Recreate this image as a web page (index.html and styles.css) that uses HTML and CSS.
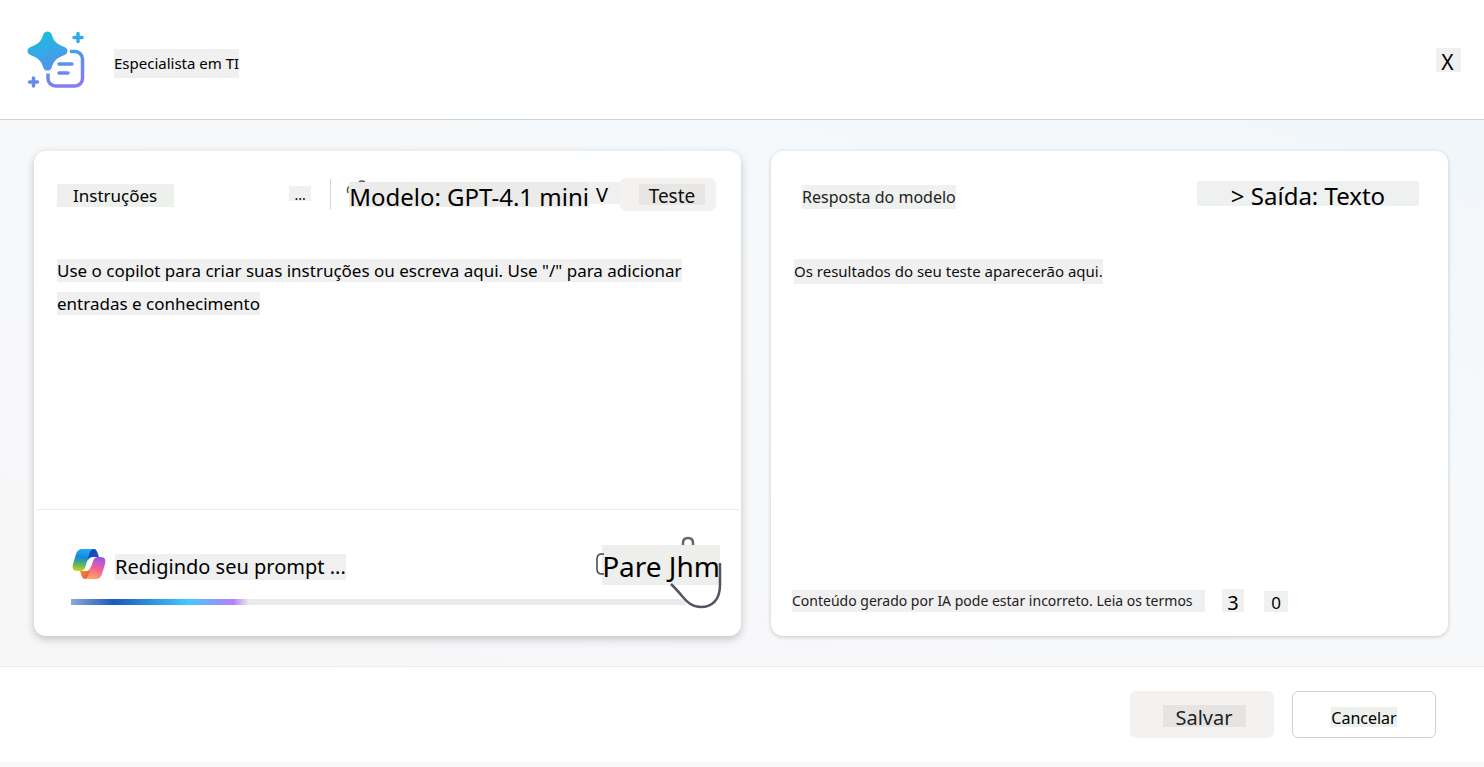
FILE: index.html
```html
<!DOCTYPE html>
<html lang="pt-BR">
<head>
<meta charset="utf-8">
<meta name="viewport" content="width=device-width, initial-scale=1">
<title>Especialista em TI</title>
<link rel="stylesheet" href="styles.css">
</head>
<body>
<header class="topbar">
  <svg class="brand" viewBox="0 0 60 60" aria-hidden="true">
    <defs>
      <linearGradient id="brand-fill" gradientUnits="userSpaceOnUse" x1="20" y1="2" x2="38" y2="58">
        <stop offset="0" stop-color="#17bfe0"/>
        <stop offset="0.55" stop-color="#4d97ea"/>
        <stop offset="1" stop-color="#857bf2"/>
      </linearGradient>
    </defs>
    <g fill="none" stroke="url(#brand-fill)" stroke-width="3.5" stroke-linecap="round">
      <path stroke-linecap="butt" d="M44 22h5a7.500 7.500 0 0 1 7.500 7.500v19.500a7.500 7.500 0 0 1-7.500 7.500H29.500a7.500 7.500 0 0 1-7.500-7.500v-5"/>
      <path d="M33 34.500h13M33 43.500h9M52 4v8M48 8h8M7.500 48.500v8M3.500 52.500h8"/>
    </g>
    <path fill="url(#brand-fill)" d="M17.500 4.500c1.200-3.400 6.800-3.400 8 0 2.200 6.700 3.400 9.300 13 13 4 1.500 4 6.500 0 8-8.500 3.300-10.800 6.300-13 13-1.200 3.400-6.800 3.400-8 0C15.300 31.800 13 28.800 4.500 25.500c-4-1.500-4-6.500 0-8 9.600-3.700 10.800-6.300 13-13z"/>
  </svg>
  <h1 class="chip chip-title">Especialista em TI</h1>
  <button class="close chip" type="button">X</button>
</header>

<main class="workspace">
  <section class="card card-raised">
    <div class="toolbar">
      <h2 class="chip chip-heading">Instruções</h2>
      <button class="chip more" type="button">...</button>
      <span class="divider"></span>
      <svg class="fragment" viewBox="0 0 22 20" aria-hidden="true">
        <path d="M4 6.500Q1.500 8.500 3 13M14 2q3-1.800 6 0" fill="none" stroke="#555" stroke-width="1.500"/>
      </svg>
      <button class="model" type="button">
        <span class="chip model-name">Modelo: GPT-4.1 mini</span>
        <span class="chip model-arrow">V</span>
      </button>
      <button class="test" type="button"><span class="chip test-label">Teste</span></button>
    </div>
    <div class="editor" role="textbox" aria-label="Instruções" tabindex="0">
      <span class="mark">Use o copilot para criar suas instruções ou escreva aqui. Use "/" para adicionar entradas e conhecimento</span>
    </div>
    <div class="drafting">
      <div class="drafting-row">
        <svg class="copilot" viewBox="0 0 34 31" aria-hidden="true">
          <defs>
            <linearGradient id="cp-left" x1="0.1" y1="0" x2="0" y2="1">
              <stop offset="0" stop-color="#20a8ee"/>
              <stop offset="0.35" stop-color="#1688d8"/>
              <stop offset="0.7" stop-color="#62b95c"/>
              <stop offset="1" stop-color="#f2cc10"/>
            </linearGradient>
            <linearGradient id="cp-right" x1="0.6" y1="0" x2="0.3" y2="1">
              <stop offset="0" stop-color="#9b55e6"/>
              <stop offset="0.5" stop-color="#f2619a"/>
              <stop offset="1" stop-color="#ffab5c"/>
            </linearGradient>
            <linearGradient id="cp-top" x1="0" y1="0" x2="1" y2="1">
              <stop offset="0" stop-color="#1a38b0"/>
              <stop offset="1" stop-color="#1a5fd0"/>
            </linearGradient>
            <linearGradient id="cp-bottom" x1="0" y1="0" x2="1" y2="1">
              <stop offset="0" stop-color="#f7a43a"/>
              <stop offset="1" stop-color="#e8402e"/>
            </linearGradient>
          </defs>
          <path fill="url(#cp-top)" d="M16 0h6c2 0 3 2 4 5l1 3h-6c-2 0-4 1-5 3l-2 1z"/>
          <path fill="url(#cp-bottom)" d="M18 30h-5c-2 0-3-2-4-5l-1-3h4c3 0 5-1 6-4l3-2z"/>
          <path fill="url(#cp-left)" d="M10 0h12c-3 0-4 3-5 6l-4 13c-1 2-2 3-5 3H5c-4 0-5-3-4-7L4 5c1-3 3-5 6-5z"/>
          <path fill="url(#cp-right)" d="M26 8h3c4 0 5 3 4 7l-3 10c-1 3-3 5-6 5H12c3 0 4-3 5-6l4-12c1-3 2-4 5-4z"/>
          <path fill="#fff" d="M21 9c-3 0-4 2-5 5l-2 5c-1 2-2 3-4 3h4c3 0 4-2 5-5l2-5c.500-2 1-3 2-3z"/>
        </svg>
        <span class="chip drafting-text">Redigindo seu prompt ...</span>
        <div class="stop-wrap">
          <button class="chip stop" type="button">Pare Jhm</button>
          <svg class="hand" viewBox="0 0 130 76" aria-hidden="true">
            <path d="M11 18H9q-5 0-5 5v10q0 5 5 5h2" transform="translate(-2 0)" fill="none" stroke="#444" stroke-width="1.500"/>
            <path d="M88 9V7q0-5 5-5t5 5v2" fill="none" stroke="#666470" stroke-width="2.500"/>
            <path d="M125 27v22c0 15-8 22-19 22-9 0-14-5-19-11-4-5-7-8-11-12" fill="none" stroke="#55535f" stroke-width="2.500"/>
          </svg>
        </div>
      </div>
      <div class="progress" role="progressbar" aria-label="Redigindo seu prompt" aria-valuenow="28" aria-valuemin="0" aria-valuemax="100"><div class="progress-fill"></div></div>
    </div>
  </section>

  <section class="card">
    <div class="toolbar response-bar">
      <h2 class="chip response-title">Resposta do modelo</h2>
      <button class="chip output" type="button">&gt; Saída: Texto</button>
    </div>
    <p class="result"><span class="chip result-text">Os resultados do seu teste aparecerão aqui.</span></p>
    <div class="terms">
      <a class="chip terms-link" href="#termos">Conteúdo gerado por IA pode estar incorreto. Leia os termos</a>
      <button class="chip vote vote-up" type="button">3</button>
      <button class="chip vote vote-down" type="button">0</button>
    </div>
  </section>
</main>

<footer class="actions">
  <button class="action save" type="button"><span class="chip save-label">Salvar</span></button>
  <button class="action cancel" type="button"><span class="chip cancel-label">Cancelar</span></button>
</footer>
</body>
</html>
```
FILE: styles.css
```css
* {
  box-sizing: border-box;
}

body {
  margin: 0;
  min-height: 100vh;
  display: flex;
  flex-direction: column;
  font-family: "Noto Sans", sans-serif;
  color: #000;
  background: #fff;
}

h1, h2, p {
  margin: 0;
  font-weight: 400;
}

button {
  margin: 0;
  padding: 0;
  border: 0;
  background: none;
  font-family: inherit;
  color: inherit;
  cursor: pointer;
}

.chip {
  display: block;
  flex: none;
  background: #f0f0f0;
  white-space: nowrap;
}

/* Header */
.topbar {
  display: flex;
  align-items: center;
  padding: 28px 23px 28px 26px;
  border-bottom: 1px solid #d0d1d1;
}

.brand {
  width: 60px;
  height: 63px;
  flex: none;
}

.chip-title {
  margin: 7px 0 0 28px;
  font-size: 15px;
  line-height: 29px;
}

.close {
  width: 25px;
  margin-left: auto;
  padding: 5px 2px 0 0;
  font-size: 21px;
  line-height: 19px;
}

/* Work area */
.workspace {
  flex: 1;
  display: grid;
  grid-template-columns: 707fr 677fr;
  gap: 30px;
  padding: 31px 36px 30px 34px;
  background: linear-gradient(to top right, #f7f7f8 0%, #f7f8fa 50%, #f6f9fb 70%, #f1f6fa 100%);
}

.card {
  display: flex;
  flex-direction: column;
  min-width: 0;
  border-radius: 12px;
  background: #fff;
  box-shadow: 0 1px 4px rgba(0, 0, 0, 0.2);
}

.card-raised {
  box-shadow: 0 3px 8px rgba(0, 0, 0, 0.22);
}

.toolbar {
  display: flex;
  align-items: flex-start;
  padding: 27px 25px 0 23px;
}

.chip-heading {
  width: 117px;
  margin-top: 6px;
  padding-left: 16px;
  font-size: 17px;
  line-height: 23px;
  background: #eef0ee;
}

.more {
  width: 22px;
  margin: 8px 19px 0 auto;
  padding-top: 2px;
  font-size: 14px;
  line-height: 13px;
}

.divider {
  width: 1px;
  height: 30px;
  margin-top: 1px;
  background: #d4d4d4;
}

.fragment {
  width: 22px;
  height: 20px;
  margin: 2px -18px 0 14px;
  flex: none;
}

.model {
  display: flex;
  align-items: flex-start;
  padding-top: 4px;
}

.model-name {
  padding-top: 5px;
  font-size: 24px;
  line-height: 20px;
  background: #ebebea;
}

.model-arrow {
  width: 31px;
  padding: 4px 0 0 7px;
  font-size: 20px;
  line-height: 18px;
  text-align: left;
}

.test {
  width: 96px;
  padding: 6px 11px 6px 19px;
  border-radius: 6px;
  background: #f3f2f1;
}

.test-label {
  padding-top: 3px;
  font-size: 19px;
  line-height: 18px;
  color: #111;
  background: #e7e6e5;
}

.editor {
  flex: 1;
  padding: 43px 25px 20px 23px;
  font-size: 17px;
  line-height: 33px;
}

.mark {
  background: #f0f0f0;
}

/* Drafting status */
.drafting {
  margin: 0 2px;
  padding: 35px 19px 31px 35px;
  border-top: 1px solid #ebebeb;
}

.drafting-row {
  display: flex;
  align-items: flex-start;
}

.copilot {
  width: 34px;
  height: 31px;
  margin: 4px 9px 0 1px;
  flex: none;
}

.drafting-text {
  margin-top: 9px;
  font-size: 20px;
  line-height: 26px;
}

.stop-wrap {
  position: relative;
  margin-left: auto;
}

.stop {
  padding-top: 2px;
  font-size: 28px;
  line-height: 38px;
  background: #eeeeec;
}

.hand {
  position: absolute;
  top: -9px;
  right: -5px;
  width: 130px;
  height: 76px;
  pointer-events: none;
}

.progress {
  height: 6px;
  margin: 14px 34px 0 0;
  background: #eaeaea;
}

.progress-fill {
  width: 29%;
  height: 100%;
  background: linear-gradient(90deg, #8baad6 0%, #185abd 24%, #45c9fb 66%, #b580fa 91%, #eaeaea 100%);
}

/* Response */
.response-bar {
  padding: 30px 29px 0 31px;
}

.response-title {
  margin-top: 4px;
  font-size: 16px;
  line-height: 24px;
  color: #222;
  background: #eff1f0;
}

.output {
  width: 222px;
  margin-left: auto;
  padding-top: 5px;
  font-size: 24px;
  line-height: 20px;
  background: #eff1f1;
}

.result {
  flex: 1;
  display: flex;
  align-items: flex-start;
  padding: 50px 23px 0;
}

.result-text {
  font-size: 15px;
  line-height: 25px;
  color: #111;
}

.terms {
  display: flex;
  align-items: flex-end;
  padding: 0 21px 24px;
}

.terms-link {
  min-width: 413px;
  font-size: 14px;
  line-height: 22px;
  color: #222;
  text-decoration: none;
}

.vote {
  width: 22px;
  margin-left: 17px;
  padding-top: 4px;
  font-size: 20px;
  line-height: 19px;
}

.vote-down {
  width: 24px;
  margin-left: 20px;
  padding-top: 3px;
  font-size: 17px;
  line-height: 18px;
}

/* Footer */
.actions {
  display: flex;
  justify-content: flex-end;
  gap: 18px;
  padding: 24px 48px;
  border-top: 1px solid #ececec;
  border-bottom: 5px solid #f7f7f7;
}

.action {
  display: flex;
  justify-content: center;
  align-items: flex-start;
  width: 144px;
  height: 47px;
  border-radius: 6px;
}

.save {
  padding: 14px 0 0 4px;
  background: #f3f2f1;
}

.save-label {
  width: 83px;
  padding-top: 4px;
  font-size: 20px;
  line-height: 18px;
  color: #222;
  background: #e5e4e3;
}

.cancel {
  padding-top: 15px;
  border: 1px solid #cfcfcf;
}

.cancel-label {
  padding-top: 2px;
  font-size: 16px;
  line-height: 18px;
  background: #eef0ee;
}
```
